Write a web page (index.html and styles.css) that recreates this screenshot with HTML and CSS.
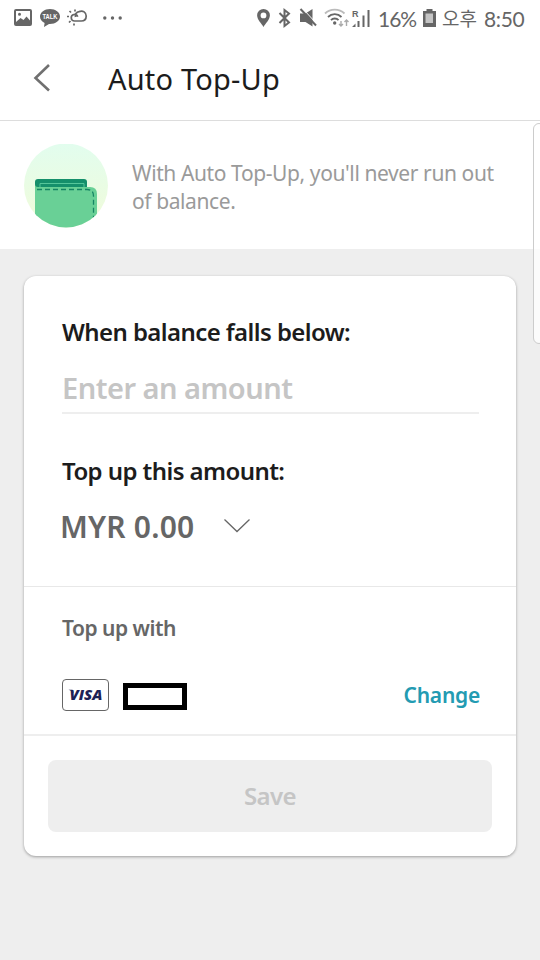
FILE: index.html
```html
<!DOCTYPE html>
<html lang="en">
<head>
<meta charset="utf-8">
<title>Auto Top-Up</title>
<link rel="stylesheet" href="styles.css">
</head>
<body>
<div class="status">
  <div class="status-left">
    <svg width="18" height="17" viewBox="0 0 18 17"><path fill="#666" fill-rule="evenodd" d="M2 0h14q2 0 2 2v13q0 2-2 2H2q-2 0-2-2V2q0-2 2-2zM2 2v11l4.500-4 3 2 3-3.500 3.500 4V2zM5.500 3.700a1.500 1.500 0 1 1 0 3 1.500 1.500 0 0 1 0-3z"/></svg>
    <svg class="talk" width="20" height="18" viewBox="0 0 20 18"><path fill="#666" d="M10 0C4.500 0 0 3.400 0 7.600c0 2.800 1.800 5 4.600 6.300L4 18l5-2.900h1c5.500 0 10-3.200 10-7.500S15.500 0 10 0z"/><text x="2.500" y="10.200" class="talk-text" textLength="15" lengthAdjust="spacingAndGlyphs">TALK</text></svg>
    <svg class="weather" width="21" height="17" viewBox="0 0 21 17"><g fill="none" stroke="#666" stroke-width="1.700"><path d="M8.500 8A4.200 4.200 0 0 1 12 2.600c4-1.600 7.200.8 7.200 4.400 0 3-2 5-5 5H7.500a3.300 3.300 0 1 1 3.200-4.300"/><path d="M8 .5v2M2.500 2l1.500 1.500M0 7.500h2M2 13.500L3.500 12M7 16.500v-2"/></g></svg>
    <svg class="dots" width="19" height="4" viewBox="0 0 19 4" fill="#666"><circle cx="1.800" cy="2" r="1.700"/><circle cx="9.500" cy="2" r="1.700"/><circle cx="17.200" cy="2" r="1.700"/></svg>
  </div>
  <div class="status-right">
    <svg width="135" height="22" viewBox="256 7 135 22">
      <path fill="#666" fill-rule="evenodd" d="M263.500 9a6.400 6.400 0 0 1 6.400 6.300c0 4.300-4.400 8.200-6.400 11.700-2-3.500-6.400-7.400-6.400-11.700A6.400 6.400 0 0 1 263.500 9zm0 3.500a2.900 2.900 0 1 0 0 5.800 2.900 2.900 0 0 0 0-5.800z"/>
      <path fill="none" stroke="#666" stroke-width="2" d="M279.500 13l9.500 9.500-4.500 3.500V10l4.500 3.500-9.500 9.500"/>
      <path fill="#666" d="M300 13.500h5.500l7-4.500v17.500l-7-4.500H300z"/><path stroke="#fff" stroke-width="1" d="M303 9l14 15"/><path stroke="#666" stroke-width="2" d="M300.500 9l15.500 16.500"/>
      <g fill="none" stroke-width="1.800"><path stroke="#bbb" d="M325 13.500a14 14 0 0 1 19.500 0"/><path stroke="#666" d="M328 17a9.500 9.500 0 0 1 13.500 0M331 20.200a5 5 0 0 1 7.500 0"/></g><circle cx="334.700" cy="23" r="1.700" fill="#666"/>
      <path fill="none" stroke="#aaa" stroke-width="1.400" d="M341 21v5m-2-2l2 2 2-2M346.500 26v-6m-2 2l2-2 2 2"/>
      <text x="352" y="16.500" class="roam">R</text>
      <path fill="#666" d="M352 27l3.500-3.500V27zM357.500 21h2v6h-2zM362.500 15.500h2V27h-2zM367.500 10h2v17h-2z"/>
    </svg>
    <span class="percent">16%</span>
    <svg class="battery" width="13" height="18" viewBox="0 0 13 18"><path fill="#666" d="M3.500 0h6v2H13v16H0V2h3.500z"/><path fill="#c5c5c5" d="M2.500 4.500h7.500v9.500H2.500z"/></svg>
    <span class="korean">오후</span>
    <span class="clock">8:50</span>
  </div>
</div>
<header class="header">
  <svg class="back" width="20" height="32" viewBox="0 0 20 32"><path d="M17 3L3.500 16 17 28.500" fill="none" stroke="#707070" stroke-width="2.600"/></svg>
  <h1 class="title">Auto Top-Up</h1>
</header>
<section class="promo">
  <svg class="wallet" width="84" height="84" viewBox="0 0 84 84">
    <defs><linearGradient id="pale" x2="0" y2="1"><stop stop-color="#e2fdee"/><stop offset="1" stop-color="#f1fbd9"/></linearGradient><clipPath id="round"><circle cx="42" cy="41.500" r="42"/></clipPath></defs>
    <g clip-path="url(#round)"><path fill="url(#pale)" d="M0 0h84v84H0z"/><rect x="11" y="35" width="52" height="14" rx="3" fill="#158f6b"/><path d="M16 44v-4.500h44V44" fill="none" stroke="#55c69a"/><path fill="#69d096" d="M11 40q0 3 3 3h52q7 0 7 7v34H11z"/><path d="M13 45.500h50q6.500 0 6.500 6.500v24" fill="none" stroke="#168563" stroke-width="1.300" stroke-dasharray="5 3"/></g>
  </svg>
  <p class="promo-text">With Auto Top-Up, you'll never run out<br>of balance.</p>
</section>
<main class="card">
  <section class="amounts">
    <div class="label below">When balance falls below:</div>
    <div class="field"><span class="placeholder">Enter an amount</span></div>
    <div class="label topup">Top up this amount:</div>
    <div class="select"><span class="value">MYR 0.00</span><svg class="chevron" width="28" height="16" viewBox="0 0 28 16"><path d="M1.500 1.500L14 13.500l12.500-12" fill="none" stroke="#666" stroke-width="1.300"/></svg></div>
  </section>
  <section class="method">
    <div class="method-title"><span>Top up with</span></div>
    <div class="method-row">
      <span class="visa"><svg width="40" height="22" viewBox="-2 -4 40 22"><text x="1.500" y="12" class="visa-text" textLength="33" lengthAdjust="spacingAndGlyphs">VISA</text><path d="M.5 1.800h4L6 5Q4 2.500.5 1.800z" fill="#1c2155"/></svg></span>
      <span class="redacted"></span>
      <span class="change">Change</span>
    </div>
  </section>
  <section class="actions"><div class="save"><span>Save</span></div></section>
</main>
<div class="edge-handle"></div>
</body>
</html>
```
FILE: styles.css
```css
* { box-sizing: border-box; }
body {
  margin: 0;
  width: 540px;
  height: 960px;
  position: relative;
  overflow: hidden;
  background: #eee;
  font-family: "Noto Sans", "Noto Sans CJK KR", sans-serif;
}
svg { display: block; flex: none; }
span, h1 { white-space: nowrap; }
.status {
  height: 36px;
  display: flex;
  justify-content: space-between;
  background: #fff;
  color: #666;
}
.status-left { display: flex; padding: 9px 0 0 14px; }
.talk { margin-left: 8px; }
.talk-text { font: 700 6.5px "Liberation Sans", sans-serif; fill: #fff; }
.weather { margin-left: 7px; }
.dots { margin: 7px 0 0 15px; }
.status-right {
  display: flex;
  width: 284px;
  height: 36px;
  padding-top: 7px;
}
.status-right > svg:first-child { margin-right: -13px; }
.roam { font: 700 9px "Liberation Sans", sans-serif; fill: #666; }
.percent, .korean, .clock { font-size: 21px; line-height: 24px; font-family: Lato, sans-serif; }
.percent { width: 39px; letter-spacing: -1px; }
.battery { margin: 2px 6px 0 6px; }
.korean { width: 36px; font-size: 19px; font-family: "Noto Sans CJK KR", sans-serif; margin-right: 6px; line-height: 22px; }
.clock { letter-spacing: -0.4px; }
.header {
  height: 85px;
  display: flex;
  align-items: center;
  padding: 0 0 1px 32px;
  background: #fff;
  border-bottom: 1px solid #ddd;
}
.title {
  margin: 2px 0 0 56px;
  font-size: 29px;
  line-height: 36px;
  font-weight: 400;
  letter-spacing: 0.2px;
  color: #1c1c1c;
}
.promo {
  height: 128px;
  display: flex;
  padding: 23px 0 0 24px;
  background: #fff;
}
.promo-text {
  margin: 15px 0 0 24px;
  font-size: 21px;
  line-height: 28px;
  letter-spacing: -0.4px;
  color: #9a9a9a;
  white-space: nowrap;
}
.card {
  margin: 27px 24px 0;
  height: 580px;
  border-radius: 12px;
  background: #fff;
  box-shadow: 0 1px 3px rgba(0, 0, 0, .35);
}
.amounts { height: 311px; padding: 39px 37px 0 38px; border-bottom: 1px solid #e8e8e8; }
.label { font-size: 24px; line-height: 34px; font-weight: 600; letter-spacing: -0.58px; color: #1c1c1c; white-space: nowrap; }
.field { height: 65px; border-bottom: 2px solid #eee; padding-top: 19px; line-height: 40px; }
.placeholder { font-size: 29px; font-weight: 600; letter-spacing: -0.5px; color: #c5c5c5; }
.topup { margin-top: 40px; }
.select { display: flex; padding-top: 19px; line-height: 40px; }
.value { width: 163px; margin-left: -2px; font-size: 30px; font-weight: 600; letter-spacing: 0.2px; color: #666; }
.chevron { margin-top: 11px; }
.method { height: 149px; padding: 26px 36px 0 38px; border-bottom: 2px solid #eee; }
.method-title { font-size: 21px; line-height: 30px; font-weight: 600; letter-spacing: -0.5px; color: #666; }
.method-row { display: flex; align-items: center; margin-top: 36px; height: 32px; }
.visa {
  width: 47px;
  height: 32px;
  display: flex;
  align-items: center;
  justify-content: center;
  border: 1px solid #666;
  border-radius: 4px;
}
.visa-text { font: italic 800 14px "Open Sans", sans-serif; fill: #1c2155; }
.redacted { width: 64px; height: 27px; margin: 3px 0 0 14px; border: 5px solid #000; }
.change { margin-left: auto; font-size: 21px; font-weight: 600; letter-spacing: -0.25px; color: #239bb2; }
.actions { padding: 24px; }
.save {
  height: 72px;
  border-radius: 8px;
  background: #eee;
  color: #c5c5c5;
  font-size: 24px;
  font-weight: 600;
  letter-spacing: -0.6px;
  line-height: 72px;
  text-align: center;
}
.edge-handle {
  position: absolute;
  left: 533px;
  top: 123px;
  width: 12px;
  height: 221px;
  border: 1px solid #ccc;
  border-radius: 6px;
  background: rgba(255, 255, 255, .75);
}
```
